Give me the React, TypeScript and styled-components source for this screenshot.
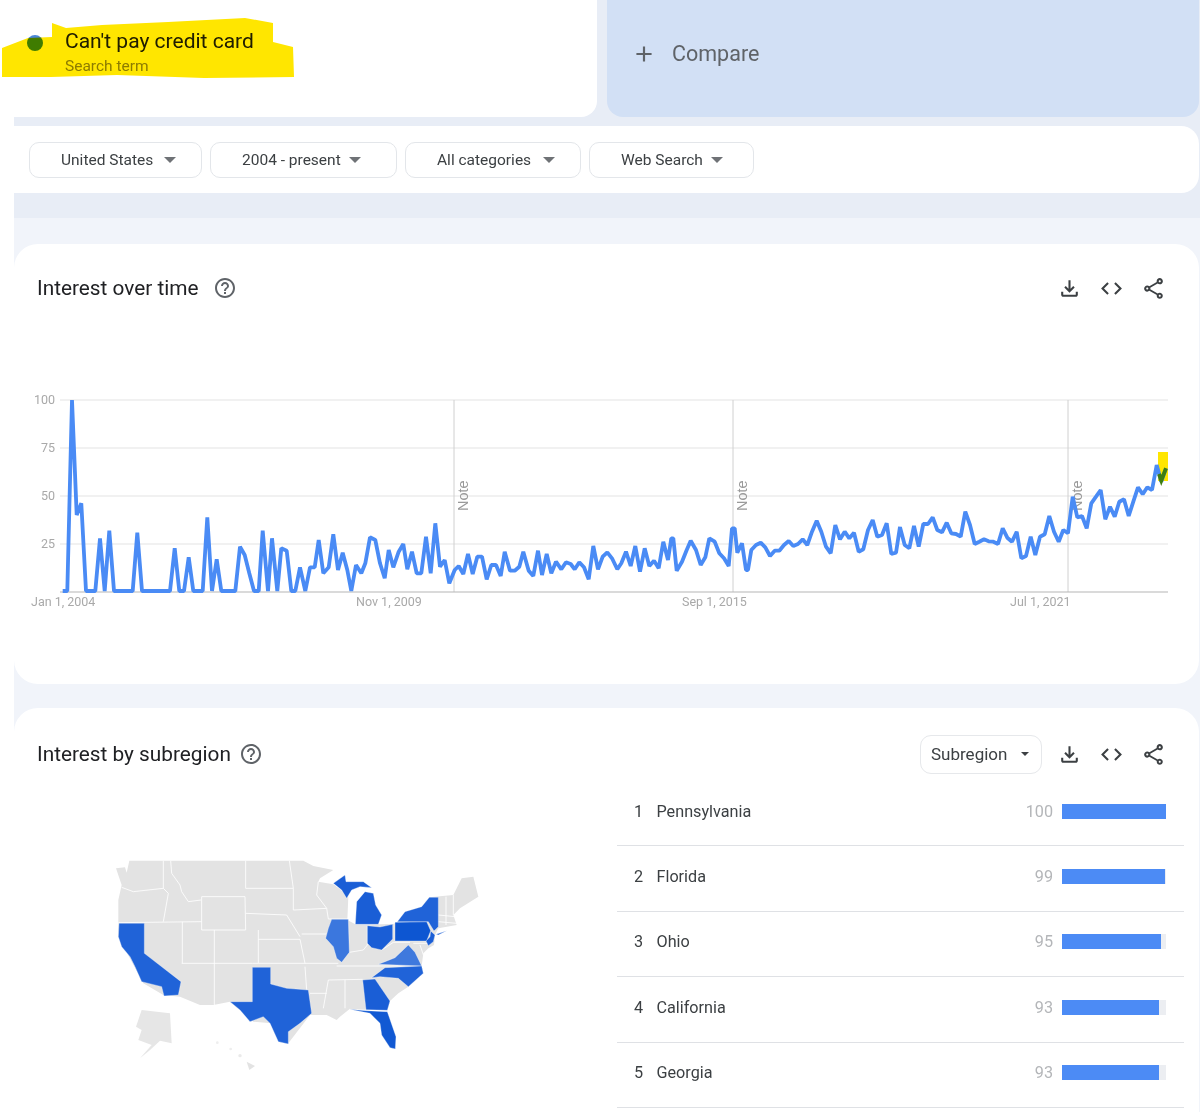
import React from 'react'
import styled, { createGlobalStyle } from 'styled-components'
import { MdOutlineFileDownload, MdCode, MdOutlineShare, MdHelpOutline, MdAdd } from 'react-icons/md'

const GlobalStyle = createGlobalStyle`
  html, body {
    margin: 0;
    background: #fff;
    font-family: Roboto, "Liberation Sans", sans-serif;
    color: #202124;
  }
`

const Page = styled.div`
  width: 1200px;
  height: 1112px;
  overflow: hidden;
  position: relative;
  background: #fff;
`
const Main = styled.div`
  margin-left: 14px;
  background: #f1f4fa;
  display: flex;
  flex-direction: column;
  gap: 24px;
  padding-right: 1px;
  height: 100%;
`
const Top = styled.div`
  background: #e8edf6;
  margin-right: -1px;
  padding: 0 1px 25px 0;
  display: flex;
  flex-direction: column;
  gap: 9px;
`
const TopRow = styled.div`
  display: flex;
  gap: 10px;
  height: 117px;
`
const TermCard = styled.div`
  width: 583px;
  background: #fff;
  border-radius: 0 0 16px 0;
  display: flex;
  align-items: flex-start;
  gap: 22px;
  padding: 29px 0 0 13px;
  box-sizing: border-box;
`
const Dot = styled.span`
  width: 16px;
  height: 16px;
  margin-top: 6px;
  border-radius: 50%;
  background: linear-gradient(#4a86d8 22%, #3f8a1e 22%);
  position: relative;
`
const TermText = styled.div`
  position: relative;
  display: flex;
  flex-direction: column;
  gap: 4px;
`
const TermName = styled.div`
  font-size: 21px;
  line-height: 24px;
`
const TermType = styled.div`
  font-size: 15.5px;
  line-height: 18px;
  color: #8d8a1c;
`
const Highlight = styled.svg`
  position: absolute;
  left: 0;
  top: 0;
  mix-blend-mode: multiply;
`
const CompareCard = styled.div`
  flex: 1;
  background: #d2e0f5;
  border-radius: 0 0 16px 16px;
  display: flex;
  align-items: center;
  gap: 15px;
  padding: 0 0 10px 24px;
  color: #5f6368;
  font-size: 21.5px;
`
const FilterBar = styled.div`
  height: 67px;
  box-sizing: border-box;
  background: #fff;
  border-radius: 0 18px 18px 0;
  display: flex;
  align-items: center;
  gap: 8px;
  padding-left: 15px;
`
const FilterButton = styled.div<{ $width: number; $gap: number }>`
  width: ${p => p.$width}px;
  height: 36px;
  box-sizing: border-box;
  border: 1px solid #e3e6ea;
  border-radius: 10px;
  background: #fff;
  display: flex;
  align-items: center;
  gap: ${p => p.$gap}px;
  padding: 1px 0 0 31px;
  font-size: 15.5px;
  color: #3c4043;
`
const Caret = styled.span<{ $color?: string; $size?: number }>`
  width: 0;
  height: 0;
  border-left: ${p => p.$size ?? 6}px solid transparent;
  border-right: ${p => p.$size ?? 6}px solid transparent;
  border-top: ${p => p.$size ?? 6}px solid ${p => p.$color ?? '#6f7276'};
`
const Card = styled.section<{ $height: number }>`
  height: ${p => p.$height}px;
  flex: none;
  background: #fff;
  border-radius: 24px;
`
const TrendCard = styled(Card)`
  margin-top: 2px;
`
const CardHeader = styled.header<{ $height: number; $gap: number }>`
  height: ${p => p.$height}px;
  display: flex;
  align-items: center;
  gap: ${p => p.$gap}px;
  padding: 0 33px 0 23px;
`
const Title = styled.h2`
  margin: 0;
  font-size: 20.8px;
  font-weight: 400;
  color: #202124;
`
const HelpIcon = styled(MdHelpOutline)`
  color: #5f6368;
  flex: none;
`
const Actions = styled.div`
  margin-left: auto;
  display: flex;
  align-items: center;
  gap: 17px;
  color: #3c4043;
`
const SubregionSelect = styled.div`
  width: 122px;
  height: 39px;
  box-sizing: border-box;
  border: 1px solid #e6e8eb;
  border-radius: 11px;
  display: flex;
  align-items: center;
  gap: 14px;
  padding-left: 10px;
  margin-right: -2px;
  font-size: 17px;
  color: #3c4043;
`
const ChartSvg = styled.svg`
  display: block;
  margin-top: 48px;
`
const ChartLabel = styled.text`
  font-family: Roboto, "Liberation Sans", sans-serif;
  font-size: 12.5px;
  fill: #a9a9a9;
`
const NoteLabel = styled.text`
  font-family: "Liberation Sans", Arial, sans-serif;
  font-size: 14.5px;
  fill: #999;
`
const RegionBody = styled.div`
  display: flex;
  margin-top: -19px;
`
const MapPane = styled.div`
  width: 603px;
  flex: none;
  padding: 69px 0 0 86px;
  box-sizing: border-box;
`
const RankList = styled.ol`
  list-style: none;
  margin: 0;
  padding: 0;
  width: 567px;
`
const RankRow = styled.li`
  height: 65.4px;
  box-sizing: border-box;
  border-bottom: 1px solid #dfe1e5;
  display: flex;
  align-items: center;
  font-size: 16.2px;
  color: #3c4043;
  padding-bottom: 4px;
`
const RankNo = styled.span`
  width: 39.5px;
  padding-left: 17px;
  box-sizing: border-box;
`
const RankName = styled.span`
  flex: 1;
`
const RankValue = styled.span`
  color: #b4b6b9;
  margin-right: 9px;
`
const BarTrack = styled.div`
  width: 104px;
  height: 15px;
  margin-right: 18px;
  background: #eceef2;
`
const BarFill = styled.div<{ $value: number }>`
  width: ${p => p.$value}%;
  height: 100%;
  background: #4c8bf5;
`

// line traced from the reference, one run per 280px stretch: x y in 3x px from the stretch origin
const runs: { x: number; y: number; pts: string }[] = [
  {
    x: 60,
    y: 480,
    pts: '8,333 22,333 36,-240 50,105 64,70 78,333 92,333 106,333 120,175 134,333 148,152 162,333 218,333 232,158 246,333 330,333 344,205 358,333 372,333 386,232 400,333 428,333 442,112 456,333 470,238 484,333 526,333 540,200 554,225 568,280 582,333 596,333 608,152 624,333 636,175 652,333 664,205 680,212 694,333 706,333 720,262 736,333 750,262 764,262 776,180 790,280 806,262 820,163 834,270'
  },
  {
    x: 340,
    y: 480,
    pts: '8,218 22,270 34,333 48,255 64,280 76,250 90,172 106,180 120,250 134,295 146,210 160,262 176,215 190,192 202,268 216,215 230,280 244,280 258,170 272,280 286,130 300,260 314,240 328,310 344,270 356,258 370,282 384,222 398,282 412,230 426,230 440,298 454,255 468,255 482,288 494,215 510,272 524,272 538,260 550,215 566,272 580,288 594,212 606,285 620,222 634,280 648,245 664,268 678,247 692,252 704,268 718,247 732,262 746,298 760,198 774,268 788,230 802,217 816,235 832,268'
  },
  {
    x: 620,
    y: 480,
    pts: '4,250 18,215 32,258 46,198 60,275 74,205 88,258 102,242 116,265 130,185 144,240 154,175 160,175 170,272 186,245 200,210 212,182 228,210 242,255 256,232 268,175 284,185 298,220 312,235 326,258 336,145 344,145 352,218 366,190 378,270 384,270 394,210 408,195 422,188 436,202 450,228 464,212 478,212 492,195 506,183 520,198 534,192 548,178 562,195 576,155 590,122 604,155 618,200 632,220 646,135 660,178 674,155 688,175 702,158 716,215 730,208 744,150 758,120 772,170 786,165 800,130 814,222 828,218 840,140'
  },
  {
    x: 900,
    y: 440,
    pts: '0,262 14,315 28,325 42,258 56,320 70,252 84,252 98,232 112,270 126,277 140,248 154,280 168,282 182,290 196,215 210,255 224,312 238,305 252,298 266,304 280,305 294,312 308,265 322,293 336,305 350,275 364,355 378,348 392,290 406,345 420,290 434,283 448,228 462,275 476,305 490,270 504,280 518,170 532,232 546,228 560,265 574,190 588,170 602,150 616,238 630,200 644,230 658,185 672,178 686,228 700,185 714,142 728,163 742,142 756,150 770,75 784,125 798,85'
  }
]

const trendPoints = runs
  .map(r =>
    r.pts
      .split(' ')
      .map(p => {
        const [px, py] = p.split(',').map(Number)
        return `${(r.x + px / 3).toFixed(1)},${(r.y + py / 3).toFixed(1)}`
      })
      .join(' ')
  )
  .join(' ')

const gridLines = [
  { y: 400, label: '100' },
  { y: 448, label: '75' },
  { y: 496, label: '50' },
  { y: 544, label: '25' }
]
const notes = [454, 733, 1068]
const dates = [
  { x: 31, label: 'Jan 1, 2004' },
  { x: 356, label: 'Nov 1, 2009' },
  { x: 682, label: 'Sep 1, 2015' },
  { x: 1010, label: 'Jul 1, 2021' }
]

const TrendChart = () => (
  <ChartSvg width={1185} height={240} viewBox="14 380 1185 240">
    {gridLines.map(g => (
      <g key={g.y}>
        <line x1={60} x2={1168} y1={g.y} y2={g.y} stroke="#e4e4e4" strokeWidth={1.2} />
        <ChartLabel x={55} y={g.y + 4} textAnchor="end">{g.label}</ChartLabel>
      </g>
    ))}
    {notes.map(x => (
      <g key={x}>
        <line x1={x} x2={x} y1={400} y2={592} stroke="#d0d0d0" />
        <NoteLabel transform={`translate(${x + 14} 511) rotate(-90)`}>Note</NoteLabel>
      </g>
    ))}
    <line x1={60} x2={1168} y1={592} y2={592} stroke="#b5b5b5" strokeWidth={1.2} />
    {dates.map(d => (
      <ChartLabel key={d.label} x={d.x} y={606}>{d.label}</ChartLabel>
    ))}
    <rect x={1158} y={452} width={10} height={29} fill="#ffe600" />
    <polyline points={trendPoints} fill="none" stroke="#4a8bf5" strokeWidth={3.8} strokeLinejoin="bevel" />
    <polyline points="1159,474 1161.3,480.5 1166,468.3" fill="none" stroke="#3f7d10" strokeWidth={3.8} />
  </ChartSvg>
)

const landOutline =
  '88,32 610,32 640,48 700,60 660,85 650,105 655,95 700,103 730,125 745,140 742,210 766,223 835,223 880,222 892,215 915,185 965,170 988,142 1060,135 1085,85 1120,80 1135,140 1080,175 1060,195 1070,225 1015,235 1005,255 1002,285 985,295 970,310 965,348 970,370 925,410 895,430 870,453 862,481 748,478 720,500 710,510 680,495 630,495 565,580 540,575 515,520 460,515 390,455 340,465 300,465 240,440 190,435 130,400 55,260 55,150 65,105 48,55 75,52 80,68'

const borders = [
  '65,112 100,125 190,115',
  '190,32 190,115 205,130 190,215',
  '212,32 215,70 240,105 245,125 265,155 303,150',
  '55,218 305,215',
  '247,215 247,340',
  '305,140 435,140 437,240 305,240 305,140',
  '437,32 437,115 580,115',
  '437,190 560,195 600,260',
  '568,32 580,115 580,180 680,175',
  '343,240 343,465',
  '475,240 475,340',
  '475,268 600,268 615,340',
  '245,340 457,340 475,340 715,340',
  '615,350 620,420',
  '605,252 680,252',
  '802,227 802,285 790,300 748,307',
  '710,348 965,348',
  '685,390 788,388',
  '630,430 680,430',
  '685,390 670,475',
  '735,390 735,475',
  '845,300 880,277 930,277',
  '1038,140 1038,225',
  '1060,135 1060,195',
  '1015,195 1065,200',
  '1015,215 1070,220',
  '655,95 650,135 680,175 685,207 745,207',
  '960,285 972,320',
  '940,280 985,280'
]

const states: { name: string; fill: string; pts: string }[] = [
  { name: 'CA', fill: '#2063d8', pts: '57,220 133,220 133,310 243,395 235,435 192,438 185,410 125,395 105,350 90,320 65,290 55,260' },
  { name: 'TX', fill: '#2063d8', pts: '457,352 512,352 512,402 560,415 625,420 635,490 600,520 565,545 565,582 535,575 510,520 490,500 450,515 420,480 390,455 457,455' },
  { name: 'IL', fill: '#3b77de', pts: '695,208 745,208 748,307 725,337 710,325 700,290 677,265 685,235' },
  { name: 'MI', fill: '#1a5ed6', pts: '766,223 770,155 795,125 820,130 827,165 845,195 835,223' },
  { name: 'MI-up', fill: '#1a5ed6', pts: '700,100 735,75 738,95 790,95 815,113 780,110 755,120 740,145 725,120' },
  { name: 'OH', fill: '#1a5ed6', pts: '802,227 840,231 878,223 878,267 845,300 815,293 802,280' },
  { name: 'PA', fill: '#0d56d2', pts: '885,217 980,215 992,242 980,273 885,273' },
  { name: 'NY', fill: '#2063d8', pts: '892,215 915,185 965,170 988,142 1015,142 1015,230 1002,243 985,215' },
  { name: 'LI', fill: '#2063d8', pts: '1008,253 1040,242 1015,255' },
  { name: 'NJ', fill: '#1a5ed6', pts: '992,243 1005,255 1000,275 985,287 978,273 990,260' },
  { name: 'VA', fill: '#3f79dd', pts: '835,343 855,335 885,323 925,285 945,307 965,348' },
  { name: 'NC', fill: '#2063d8', pts: '815,383 855,353 965,348 970,370 925,410 895,385 840,380' },
  { name: 'GA', fill: '#1a5ed6', pts: '788,390 825,387 870,453 862,481 798,479' },
  { name: 'FL', fill: '#1159d3', pts: '748,478 798,482 862,485 888,560 886,597 870,593 845,555 840,520 810,490' }
]

const UsMap = () => (
  <svg width={400} height={230} viewBox="0 0 1200 690">
    <polygon points={landOutline} fill="#e3e3e3" />
    <polygon points="125,480 210,490 215,580 180,572 150,600 120,625 155,585 115,570 125,540 108,530" fill="#e6e6e6" />
    <polygon points="440,635 465,648 448,660" fill="#e3e3e3" />
    <circle cx={420} cy={617} r={5} fill="#eaeaea" />
    <circle cx={392} cy={597} r={4} fill="#eeeeee" />
    <circle cx={352} cy={578} r={4} fill="#eeeeee" />
    {borders.map(b => (
      <polyline key={b} points={b} fill="none" stroke="#fff" strokeWidth={2.5} />
    ))}
    {states.map(s => (
      <polygon key={s.name} points={s.pts} fill={s.fill} stroke="#fff" strokeWidth={1} />
    ))}
  </svg>
)

const filters = [
  { label: 'United States', width: 173, gap: 11 },
  { label: '2004 - present', width: 187, gap: 8 },
  { label: 'All categories', width: 176, gap: 12 },
  { label: 'Web Search', width: 165, gap: 8 }
]

const regions = [
  { rank: 1, name: 'Pennsylvania', value: 100 },
  { rank: 2, name: 'Florida', value: 99 },
  { rank: 3, name: 'Ohio', value: 95 },
  { rank: 4, name: 'California', value: 93 },
  { rank: 5, name: 'Georgia', value: 93 }
]

const App = () => (
  <Page>
    <GlobalStyle />
    <Main>
      <Top>
        <TopRow>
          <TermCard>
            <Dot />
            <TermText>
              <TermName>Can't pay credit card</TermName>
              <TermType>Search term</TermType>
            </TermText>
          </TermCard>
          <CompareCard>
            <MdAdd size={26} />
            Compare
          </CompareCard>
        </TopRow>
        <FilterBar>
          {filters.map(f => (
            <FilterButton key={f.label} $width={f.width} $gap={f.gap}>
              {f.label}
              <Caret />
            </FilterButton>
          ))}
        </FilterBar>
      </Top>
      <TrendCard $height={440}>
        <CardHeader $height={88} $gap={14}>
          <Title>Interest over time</Title>
          <HelpIcon size={24} />
          <Actions>
            <MdOutlineFileDownload size={25} />
            <MdCode size={25} />
            <MdOutlineShare size={25} />
          </Actions>
        </CardHeader>
        <TrendChart />
      </TrendCard>
      <Card $height={440}>
        <CardHeader $height={92} $gap={8}>
          <Title>Interest by subregion</Title>
          <HelpIcon size={24} />
          <Actions>
            <SubregionSelect>
              Subregion
              <Caret $color="#3c4043" $size={4} />
            </SubregionSelect>
            <MdOutlineFileDownload size={25} />
            <MdCode size={25} />
            <MdOutlineShare size={25} />
          </Actions>
        </CardHeader>
        <RegionBody>
          <MapPane>
            <UsMap />
          </MapPane>
          <RankList>
            {regions.map(r => (
              <RankRow key={r.rank}>
                <RankNo>{r.rank}</RankNo>
                <RankName>{r.name}</RankName>
                <RankValue>{r.value}</RankValue>
                <BarTrack>
                  <BarFill $value={r.value} />
                </BarTrack>
              </RankRow>
            ))}
          </RankList>
        </RegionBody>
      </Card>
    </Main>
    <Highlight width={300} height={80} viewBox="0 0 300 80">
      <polygon points="2,48 28,38 52,37 52,23 66,28 102,25 168,22 245,18 273,23 273,42 293,47 294,77 204,78 117,75 51,77 2,77" fill="#ffe600" />
    </Highlight>
  </Page>
)

export default App
